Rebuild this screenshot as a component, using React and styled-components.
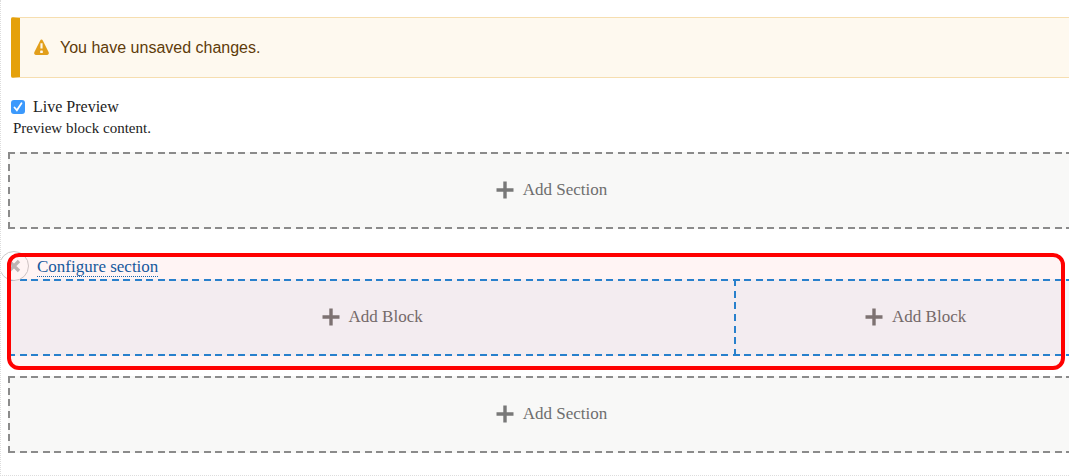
import { useState } from "react";
import styled, { createGlobalStyle } from "styled-components";

const GlobalStyle = createGlobalStyle`
  body {
    margin: 0;
    background: #fff;
    color: #222;
    font-family: Georgia, "Liberation Serif", serif;
  }
  *, *::before, *::after {
    box-sizing: border-box;
  }
`;

const Page = styled.main`
  padding: 17px 0 22px 7px;
  border-left: 1px dotted #ddd;
  border-bottom: 1px dotted #ddd;
  overflow: hidden;
  position: relative;
`;

const Message = styled.div`
  display: flex;
  align-items: center;
  gap: 10px;
  height: 61px;
  margin: 0 -26px 0 3px;
  padding-left: 13px;
  border: 1px solid #f6deb0;
  border-left: 9px solid #e5a10b;
  border-radius: 2px;
  background: #fef9ef;
  color: #5e3c0a;
  font-family: "Liberation Sans", Arial, sans-serif;
  font-size: 16px;
`;

const Preview = styled.div`
  display: flex;
  flex-direction: column;
  margin: 18px 0 14px 3px;
`;

const PreviewLabel = styled.label`
  display: flex;
  align-items: center;
  gap: 8px;
  font-size: 16px;
  line-height: 22px;
`;

const Checkbox = styled.input`
  appearance: none;
  width: 14px;
  height: 14px;
  margin: 0;
  border-radius: 3px;
  background: #3b99fc url("data:image/svg+xml,%3Csvg xmlns='http://www.w3.org/2000/svg' viewBox='0 0 14 14'%3E%3Cpath d='M3.5 7.5l2.4 2.8 4.6-7' fill='none' stroke='%23fff' stroke-width='1.8' stroke-linecap='round'/%3E%3C/svg%3E");
  &:not(:checked) {
    background: #fff;
    border: 1px solid #bbb;
  }
`;

const Description = styled.p`
  margin: 0 0 0 2px;
  font-size: 15px;
  line-height: 20px;
`;

// dashes are 7px long, laid out on the top, bottom and left edges
const dashX = (c) =>
  `linear-gradient(90deg, ${c} 7px, transparent 7px 12px, ${c} 12px 19px, transparent 19px)`;
const dashY = (c) =>
  `linear-gradient(${c} 7px, transparent 7px 12px, ${c} 12px 19px, transparent 19px 23px, ${c} 23px 30px, transparent 30px)`;

const AddSection = styled.div`
  display: flex;
  align-items: center;
  justify-content: center;
  height: 77px;
  margin-right: -26px;
  padding-bottom: 2px;
  background:
    ${dashX("#8b8b8b")} 0 0 / 23px 2px repeat-x,
    ${dashX("#8b8b8b")} 0 100% / 23px 2px repeat-x,
    ${dashY("#8b8b8b")} 0 0 / 2px 35px repeat-y,
    #f8f8f7;
`;

const AddLink = styled.a`
  display: flex;
  align-items: center;
  gap: 9px;
  color: #6e6e6e;
  font-size: 17px;
  line-height: 24px;
  text-decoration: none;
`;

const Section = styled.section`
  position: relative;
  margin: 24px 0 20px;
`;

const SectionHeader = styled.header`
  display: flex;
  align-items: flex-end;
  height: 26px;
  padding: 0 0 2px 29px;
`;

const Remove = styled.button`
  position: absolute;
  top: -2px;
  left: -9px;
  width: 30px;
  height: 30px;
  padding: 0;
  border: 1px solid #ccc;
  border-radius: 50%;
  background: #fff;
  svg {
    display: block;
    margin: auto;
  }
`;

const Configure = styled.a`
  border-bottom: 1px dotted #0c6bb5;
  color: #0c5da5;
  font-size: 17px;
  line-height: 19px;
  text-decoration: none;
`;

const Regions = styled.div`
  display: grid;
  grid-template-columns: 67fr 33fr;
  height: 77px;
  margin-right: -26px;
  background:
    ${dashX("#1f86d6")} 0 0 / 23px 2px repeat-x,
    ${dashX("#1f86d6")} 0 100% / 23px 2px repeat-x,
    #f3f7fb;
`;

const Region = styled.div`
  display: flex;
  align-items: center;
  justify-content: center;
  padding-bottom: 2px;
  &:first-child {
    background: ${dashY("#1f86d6")} 100% 0 / 2px 35px repeat-y;
  }
`;

const Highlight = styled.div`
  position: absolute;
  inset: 0 4px -14px -1px;
  border: 4px solid #f00;
  border-radius: 12px;
  background: rgba(255, 0, 0, 0.045);
  pointer-events: none;
`;

const WarningIcon = () => (
  <svg width="17" height="17" viewBox="0 0 16 16" aria-hidden="true">
    <path
      fill="#e29f1b"
      d="M14.66 12.316l-5.316-10.633c-.738-1.476-1.946-1.476-2.685 0l-5.317 10.633c-.738 1.477.008 2.684 1.658 2.684h10.002c1.65 0 2.396-1.207 1.658-2.684zm-7.66-8.316h2.002v5h-2.002v-5zm2.252 8.615c0 .344-.281.625-.625.625h-1.25c-.345 0-.626-.281-.626-.625v-1.239c0-.344.281-.625.626-.625h1.25c.344 0 .625.281.625.625v1.239z"
    />
  </svg>
);

const PlusIcon = () => (
  <svg width="18" height="18" viewBox="0 0 18 18" aria-hidden="true">
    <path d="M9 0.5v17M0.5 9h17" stroke="#787878" strokeWidth="3.4" />
  </svg>
);

const CrossIcon = () => (
  <svg width="14" height="14" viewBox="0 0 14 14" aria-hidden="true">
    <path d="M2 2l10 10M12 2L2 12" stroke="#bbb" strokeWidth="3.4" />
  </svg>
);

const Add = ({ children }) => (
  <AddLink href="#">
    <PlusIcon />
    {children}
  </AddLink>
);

const App = () => {
  const [preview, setPreview] = useState(true);

  return (
    <>
      <GlobalStyle />
      <Page>
        <Message role="status">
          <WarningIcon />
          You have unsaved changes.
        </Message>
        <Preview>
          <PreviewLabel>
            <Checkbox
              type="checkbox"
              checked={preview}
              aria-describedby="preview-description"
              onChange={(e) => setPreview(e.target.checked)}
            />
            Live Preview
          </PreviewLabel>
          <Description id="preview-description">Preview block content.</Description>
        </Preview>
        <AddSection>
          <Add>Add Section</Add>
        </AddSection>
        <Section>
          <SectionHeader>
            <Remove aria-label="Remove section">
              <CrossIcon />
            </Remove>
            <Configure href="#">Configure section</Configure>
          </SectionHeader>
          <Regions>
            <Region>
              <Add>Add Block</Add>
            </Region>
            <Region>
              <Add>Add Block</Add>
            </Region>
          </Regions>
          <Highlight />
        </Section>
        <AddSection>
          <Add>Add Section</Add>
        </AddSection>
      </Page>
    </>
  );
};

export default App;
